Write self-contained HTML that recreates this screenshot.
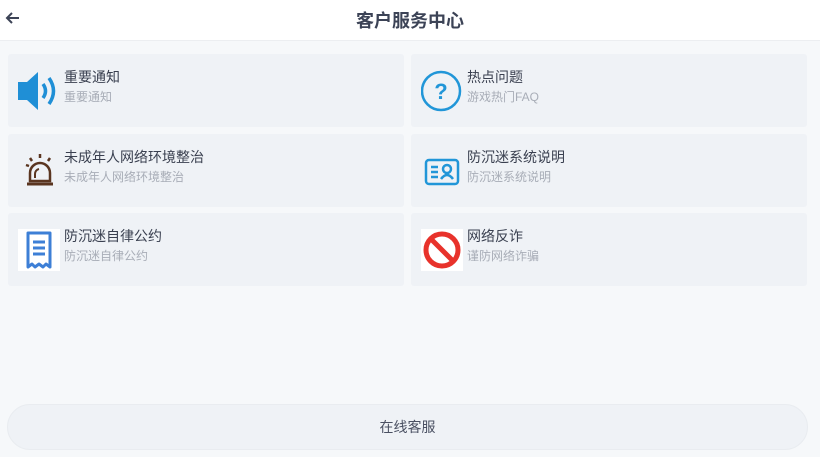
<!DOCTYPE html>
<html><head><meta charset="utf-8"><style>
*{margin:0;padding:0;box-sizing:border-box}
body{width:820px;height:457px;background:#f6f8fa;font-family:"Liberation Sans","Noto Sans CJK SC",sans-serif;position:relative;overflow:hidden}
.hd{position:absolute;left:0;top:0;width:820px;height:41px;background:#fff;border-bottom:1px solid #eceef1}
.hd .t{position:absolute;left:0;right:0;top:7px;text-align:center;font-size:18px;color:#3c4356;font-weight:bold;padding-left:0}
.hd svg{position:absolute;left:5px;top:10px}
.c{position:absolute;width:396px;height:73px;background:#eff2f6;border-radius:3px}
.c .ic{position:absolute;left:10px;top:16px;width:42px;height:42px}
.c .a{position:absolute;left:56px;top:13px;font-size:14px;color:#3a4050}
.c .b{position:absolute;left:56px;top:34px;font-size:12px;color:#a8adb7}
.btn{position:absolute;left:7px;top:404px;width:801px;height:46px;border-radius:23px;background:#eff2f6;border:1px solid #e9ecf0;text-align:center;line-height:44px;font-size:14px;color:#4a5062}
</style></head><body>
<div class="hd"><svg width="16" height="16" viewBox="0 0 16 16"><path d="M14 8H2M7 3L2 8l5 5" fill="none" stroke="#3c4356" stroke-width="2"/></svg><div class="t">客户服务中心</div></div>

<div class="c" style="left:8px;top:54px">
<svg class="ic" viewBox="0 0 42 42"><path d="M0 12h9l11-10v38l-11-10h-9z" fill="#1f8fd6"/><path d="M25 14q5 7 0 14" fill="none" stroke="#1f8fd6" stroke-width="3.5"/><path d="M31 8q9 13 0 26" fill="none" stroke="#1f8fd6" stroke-width="3.5"/></svg>
<div class="a">重要通知</div><div class="b">重要通知</div></div>

<div class="c" style="left:411px;top:54px">
<svg class="ic" viewBox="0 0 42 42"><circle cx="20" cy="21" r="19" fill="none" stroke="#2196d8" stroke-width="2.5"/><text x="20" y="29" text-anchor="middle" font-size="22" font-weight="bold" fill="#2196d8" font-family="Liberation Sans">?</text></svg>
<div class="a">热点问题</div><div class="b">游戏热门FAQ</div></div>

<div class="c" style="left:8px;top:134px">
<svg class="ic" viewBox="0 0 42 42"><path d="M9 34h26" stroke="#5a3520" stroke-width="3"/><path d="M12 31v-8a10 10 0 0 1 20 0v8z" fill="none" stroke="#5a3520" stroke-width="2.5"/><path d="M17 28v-4a5 5 0 0 1 4-5" fill="none" stroke="#5a3520" stroke-width="2"/><path d="M22 4v4M12 8l2 3M32 8l-2 3M8 15l3 1" stroke="#5a3520" stroke-width="2.5"/></svg>
<div class="a">未成年人网络环境整治</div><div class="b">未成年人网络环境整治</div></div>

<div class="c" style="left:411px;top:134px">
<svg class="ic" viewBox="0 0 42 42"><rect x="5" y="10" width="32" height="24" rx="3" fill="none" stroke="#2196d8" stroke-width="2.5"/><path d="M10 17h7M10 22h7M10 27h7" stroke="#2196d8" stroke-width="2.5"/><circle cx="26" cy="19" r="4" fill="none" stroke="#2196d8" stroke-width="2.5"/><path d="M20 29q6-8 12 0" fill="none" stroke="#2196d8" stroke-width="2.5"/></svg>
<div class="a">防沉迷系统说明</div><div class="b">防沉迷系统说明</div></div>

<div class="c" style="left:8px;top:213px">
<svg class="ic" viewBox="0 0 42 42"><rect width="42" height="42" fill="#fff"/><path d="M10 4h22v34l-4-3-3 3-4-3-4 3-3-3-4 3z" fill="none" stroke="#3d7fd6" stroke-width="3" stroke-linejoin="round"/><path d="M15 13h12M15 19h12M15 25h12" stroke="#3d7fd6" stroke-width="3"/></svg>
<div class="a">防沉迷自律公约</div><div class="b">防沉迷自律公约</div></div>

<div class="c" style="left:411px;top:213px">
<svg class="ic" viewBox="0 0 42 42"><rect width="42" height="42" fill="#fff"/><circle cx="21" cy="21" r="16" fill="none" stroke="#e8322b" stroke-width="5"/><path d="M10 10l22 22" stroke="#e8322b" stroke-width="5"/></svg>
<div class="a">网络反诈</div><div class="b">谨防网络诈骗</div></div>

<div class="btn">在线客服</div>
</body></html>
